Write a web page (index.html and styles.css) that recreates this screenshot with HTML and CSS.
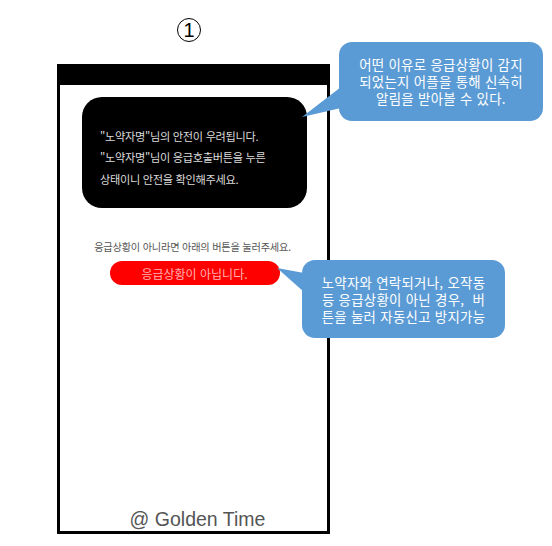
FILE: index.html
```html
<!DOCTYPE html>
<html lang="ko">
<head>
  <meta charset="UTF-8">
  <meta name="viewport" content="width=device-width, initial-scale=1.0">
  <title>Golden Time - 안전 확인</title>
  <link rel="stylesheet" href="styles.css">
</head>
<body>

  <div class="stage">
    <div class="step-no">1</div>

    <div class="phone">
      <div class="status-bar"></div>
      <div class="screen">
        <div class="alert-card">
          <p>"노약자명"님의 안전이 우려됩니다.</p>
          <p>"노약자명"님이 응급호출버튼을 누른</p>
          <p>상태이니 안전을 확인해주세요.</p>
        </div>
        <p class="hint">응급상황이 아니라면 아래의 버튼을 눌러주세요.</p>
        <button class="cancel-btn">응급상황이 아닙니다.</button>
        <div class="footer">@ Golden Time</div>
      </div>
    </div>

    <!-- 설명 말풍선 -->
    <svg class="tails" width="552" height="546">
      <polygon points="302,117 341,87 341,108" fill="#5b9bd5"/>
      <polygon points="277,268 304,273 304,292" fill="#5b9bd5"/>
    </svg>
    <div class="callout callout-top">
      <span>어떤 이유로 응급상황이 감지</span>
      <span>되었는지 어플을 통해 신속히</span>
      <span>알림을 받아볼 수 있다.</span>
    </div>
    <div class="callout callout-mid">
      <span>노약자와 연락되거나, 오작동</span>
      <span>등 응급상황이 아닌 경우,&nbsp; 버</span>
      <span>튼을 눌러 자동신고 방지가능</span>
    </div>
  </div>

</body>
</html>
```

FILE: styles.css
```css
body {
  margin: 0;
  background-color: #fff;
  font-family: "Noto Sans CJK KR", "Liberation Sans", sans-serif;
}

.stage {
  position: relative;
  width: 552px;
  height: 546px;
  overflow: hidden;
}

.step-no {
  width: 22px;
  height: 22px;
  margin: 18px 0 0 177px;
  border: 1.5px solid #000;
  border-radius: 50%;
  font-family: "Liberation Sans", sans-serif;
  font-size: 20px;
  line-height: 22px;
  text-align: center;
}

.phone {
  box-sizing: border-box;
  width: 273px;
  height: 470px;
  margin: 22px 0 0 57px;
  border: 3px solid #000;
  border-top: none;
  display: flex;
  flex-direction: column;
}

.status-bar {
  height: 21px;
  background-color: #000;
  margin: 0 -3px;
}

.screen {
  flex: 1;
  display: flex;
  flex-direction: column;
  align-items: center;
}

.alert-card {
  box-sizing: border-box;
  width: 225px;
  height: 111px;
  margin: 12px 0 0 22px;
  padding: 29px 0 0 18px;
  background-color: #000;
  border-radius: 20px;
  align-self: flex-start;
}

.alert-card p {
  margin: 0;
  color: #dcdcdc;
  font-size: 11.2px;
  line-height: 21.3px;
  letter-spacing: -0.3px;
}

.hint {
  margin: 32px 0 0 -2px;
  color: #555;
  font-size: 10.2px;
  line-height: 13px;
  letter-spacing: -0.2px;
}

.cancel-btn {
  width: 170px;
  height: 24px;
  margin: 8px 0 0 2px;
  border: none;
  border-radius: 12px;
  background-color: #ff0000;
  color: #ffb0b0;
  font-family: inherit;
  font-size: 12px;
  padding: 0;
}

.footer {
  margin-top: auto;
  margin-bottom: 1px;
  padding-left: 8px;
  color: #555;
  font-family: "Liberation Sans", sans-serif;
  font-size: 19.5px;
  line-height: 22px;
}

.tails {
  position: absolute;
  left: 0;
  top: 0;
}

.callout {
  position: absolute;
  box-sizing: border-box;
  background-color: #5b9bd5;
  border-radius: 13px;
  color: #fff;
  font-size: 13.4px;
  letter-spacing: 0.3px;
  text-align: center;
  display: flex;
  flex-direction: column;
  align-items: center;
  justify-content: center;
}

.callout span {
  display: block;
  height: 17px;
  line-height: 17px;
  white-space: nowrap;
}

.callout-top {
  left: 339px;
  top: 42px;
  width: 204px;
  height: 79px;
}

.callout-mid {
  left: 302px;
  top: 260px;
  width: 203px;
  height: 78px;
}
```
